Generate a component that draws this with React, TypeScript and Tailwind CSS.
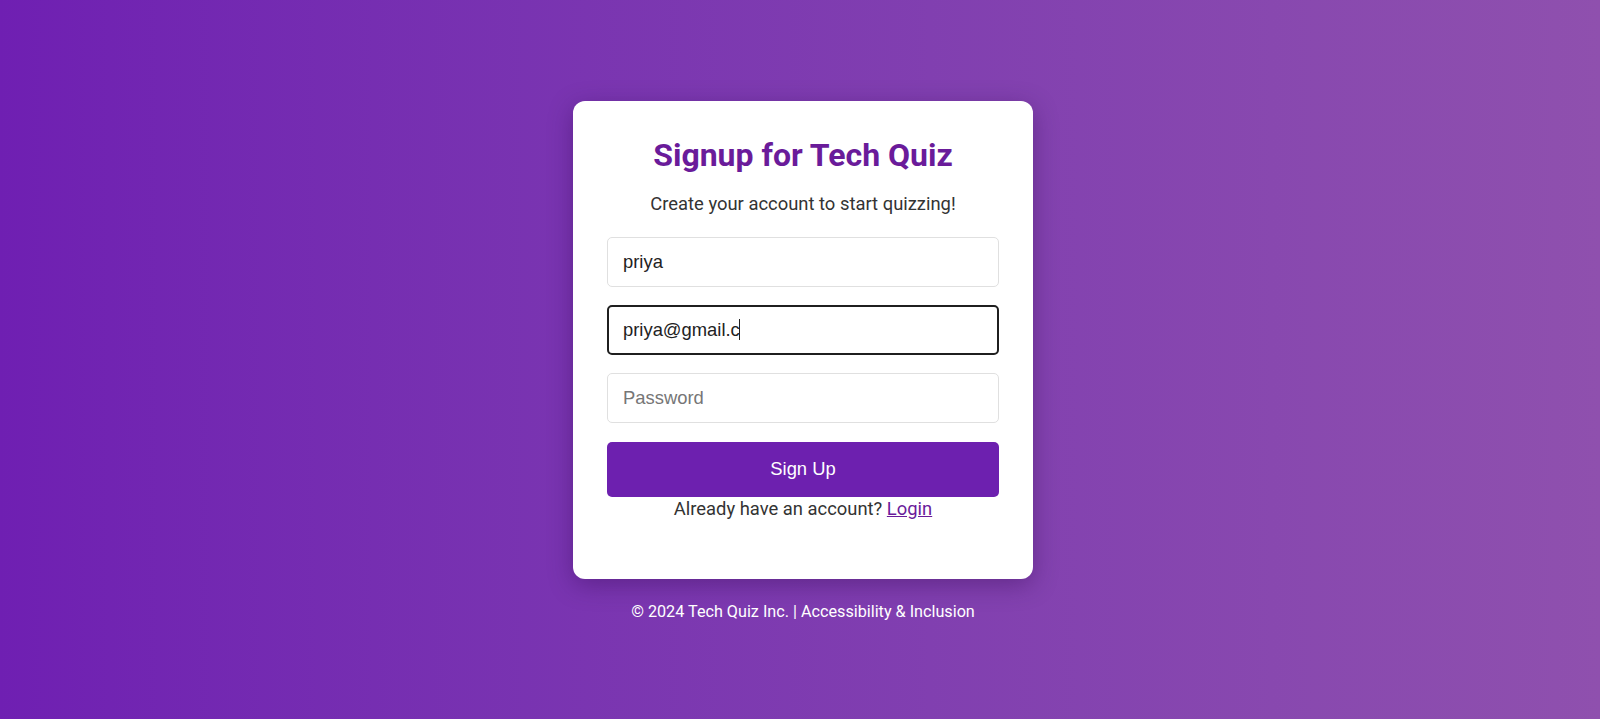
export default function App() {
    return (
        <div className="w-full h-screen pt-[2px] flex flex-col items-center justify-center bg-gradient-to-r from-[#6f1fb2] to-[#8f50ae] font-['Roboto',sans-serif]">
            <div className="w-[460px] ml-[6px] bg-white rounded-xl shadow-[0_6px_24px_rgba(40,0,70,0.35)] px-[34px] pt-[35px] pb-[59px] flex flex-col items-center">
                <h1 className="text-[32px] leading-[38px] font-bold text-[#6a1b9a]">Signup for Tech Quiz</h1>
                <p className="mt-[19px] text-[18.4px] leading-[22px] text-[#333]">Create your account to start quizzing!</p>
                <form className="w-full mt-[22px] flex flex-col gap-[18px] font-['Liberation_Sans',Arial,sans-serif]">
                    <input
                        type="text"
                        defaultValue="priya"
                        readOnly
                        className="w-full h-[50px] px-[15px] text-[18.4px] text-[#222] border border-[#e0e0e0] rounded-[5px] outline-none"
                    />
                    <div className="w-full h-[50px] px-[14px] flex items-center border-2 border-[#1f1f1f] rounded-[5px]">
                        <span className="text-[18.4px] text-[#222]">priya@gmail.c</span>
                        <span className="w-px h-[21px] bg-[#222] -ml-[1px]"></span>
                    </div>
                    <input
                        type="password"
                        placeholder="Password"
                        readOnly
                        className="w-full h-[50px] px-[15px] text-[18.4px] text-[#222] placeholder-[#767676] border border-[#e0e0e0] rounded-[5px] outline-none"
                    />
                    <button
                        type="button"
                        className="w-full h-[55px] mt-px bg-[#6d20af] text-white text-[18.4px] rounded-[5px]"
                    >
                        Sign Up
                    </button>
                </form>
                <p className="mt-[1px] text-[18.4px] leading-[22px] text-[#333]">
                    Already have an account? <a href="#" className="text-[#6a1b9a] underline">Login</a>
                </p>
            </div>
            <footer className="mt-[23px] ml-[6px] text-[16.2px] leading-[19px] text-white">
                © 2024 Tech Quiz Inc. | Accessibility &amp; Inclusion
            </footer>
        </div>
    )
}
